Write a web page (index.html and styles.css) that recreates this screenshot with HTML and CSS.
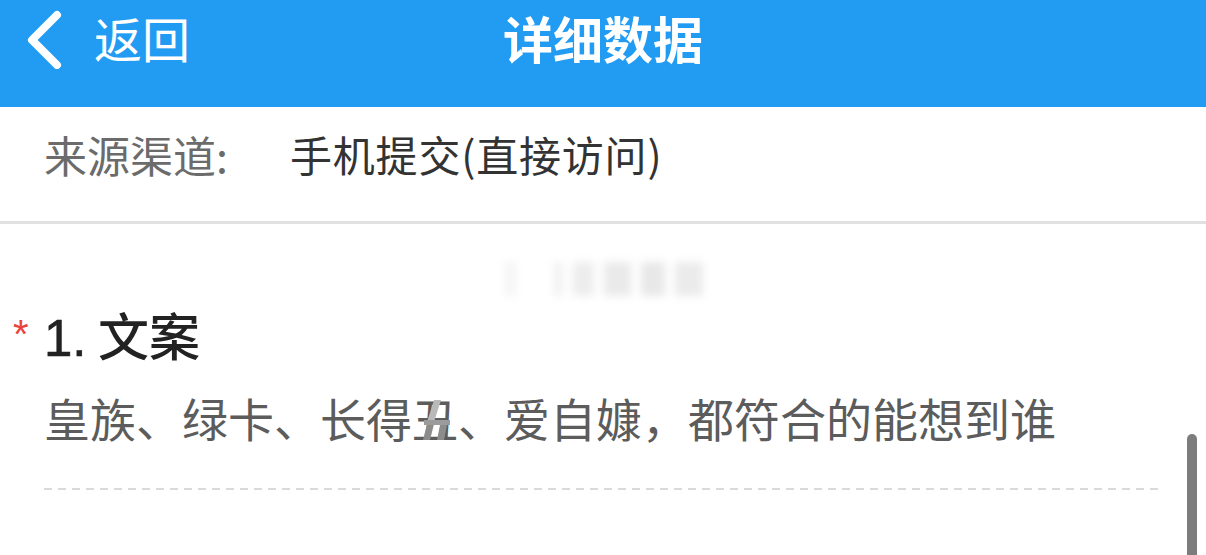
FILE: index.html
```html
<!DOCTYPE html>
<html lang="zh-CN">
<head>
<meta charset="utf-8">
<title>详细数据</title>
<link rel="stylesheet" href="styles.css">
</head>
<body>
<div class="page">
  <header class="topbar">
    <div class="back">
      <svg class="chev" width="40" height="60" viewBox="0 0 40 60">
        <polyline points="33,6 8,31 33,56" fill="none" stroke="#fff" stroke-width="8" stroke-linecap="round" stroke-linejoin="round"/>
      </svg>
      <span class="back-text">返回</span>
    </div>
    <h1 class="title">详细数据</h1>
  </header>

  <div class="source-row">
    <span class="label">来源渠道:</span>
    <span class="value">手机提交(直接访问)</span>
  </div>

  <div class="blurred"><span class="b0"></span><span class="b1"></span><span class="b2"></span><span class="b3"></span><span class="b4"></span><span class="b5"></span></div>

  <div class="question">
    <span class="req">*</span>
    <span class="q-title"><span class="num">1.</span> 文案</span>
  </div>
  <div class="answer">皇族、绿卡、长得<span class="glitch">丑<svg class="glitch-svg" width="34" height="42" viewBox="0 0 34 42"><polygon points="14,0 21,0 14,22 7,22" fill="#b9b9b9"/><polygon points="8,20 15,20 10,40 3,40" fill="#8c8c8c"/><polygon points="21,20 28,20 24,40 17,40" fill="#8c8c8c"/><rect x="4" y="20" width="26" height="5" fill="#9b9b9b"/></svg></span>、爱自嫝，都符合的能想到谁</div>
  <div class="dashed"></div>

  <div class="scrollbar"></div>
</div>
</body>
</html>
```

FILE: styles.css
```css
html, body {
  margin: 0;
  padding: 0;
  background: #ffffff;
}

.page {
  position: relative;
  width: 1206px;
  height: 555px;
  overflow: hidden;
  font-family: "Noto Sans CJK SC", "Noto Sans", sans-serif;
}

.topbar {
  position: relative;
  height: 107px;
  background: #229cf2;
  display: flex;
  align-items: flex-start;
  justify-content: center;
}

.back {
  position: absolute;
  left: 24px;
  top: 0;
  height: 74px;
  display: flex;
  align-items: center;
  color: #fff;
}

.chev {
  display: block;
  margin-top: 4px;
}

.back-text {
  font-size: 48px;
  line-height: 74px;
  margin-left: 30px;
  color: #fff;
}

.title {
  margin: 0;
  font-size: 50px;
  font-weight: bold;
  line-height: 74px;
  color: #fff;
}

.source-row {
  display: flex;
  padding: 17px 0 37px 44px;
  border-bottom: 3px solid #e1e1e1;
  line-height: 60px;
}

.label {
  color: #6b6b6b;
  width: 246px;
  font-size: 43px;
}

.value {
  color: #333333;
  font-size: 42px;
  letter-spacing: 0.8px;
}

.blurred {
  margin: 38px auto 0;
  width: 200px;
  height: 34px;
  display: flex;
  gap: 10px;
  filter: blur(4px);
  padding-left: 2px;
  box-sizing: border-box;
}

.blurred span {
  display: block;
  height: 34px;
}

.blurred .b0 { width: 12px; background: #f4f4f4; }
.blurred .b1 { width: 10px; background: #f1f1f1; margin-left: 28px; }
.blurred .b2 { width: 22px; background: #ededed; }
.blurred .b3 { width: 30px; background: #eaeaea; }
.blurred .b4 { width: 26px; background: #e8e8e8; }
.blurred .b5 { width: 30px; background: #ebebeb; }

.question {
  display: flex;
  align-items: flex-start;
  margin-top: 8px;
  height: 60px;
}

.req {
  color: #e9443c;
  font-size: 40px;
  line-height: 60px;
  width: 31px;
  margin-left: 13px;
  font-family: "Liberation Sans", sans-serif;
}

.q-title {
  font-size: 51px;
  line-height: 60px;
  color: #222222;
  font-weight: 500;
}

.q-title .num {
  font-weight: normal;
  font-family: "Liberation Sans", "Noto Sans CJK SC", sans-serif;
  -webkit-text-stroke: 0.6px #222;
}

.answer {
  margin-top: 23px;
  padding-left: 44px;
  font-size: 46px;
  line-height: 60px;
  color: #5c5c5c;
  white-space: nowrap;
}

.glitch {
  position: relative;
}

.glitch-svg {
  position: absolute;
  left: 8px;
  top: 16px;
}

.dashed {
  margin: 41px 43px 0 44px;
  height: 2px;
  background: repeating-linear-gradient(to right, #dadada 0 8px, transparent 8px 14px);
}

.scrollbar {
  position: absolute;
  left: 1187px;
  top: 434px;
  width: 10px;
  height: 140px;
  border-radius: 5px;
  background: #7d7d7d;
}
```
